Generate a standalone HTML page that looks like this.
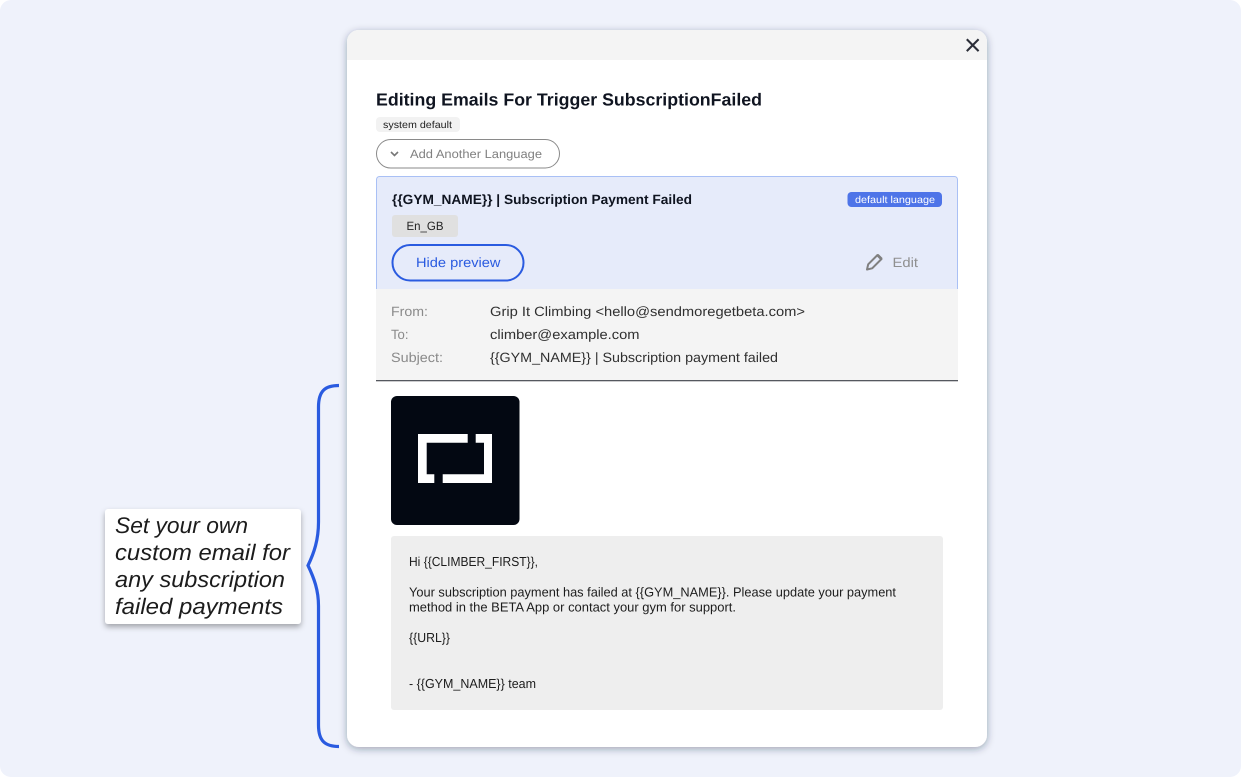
<!DOCTYPE html>
<html lang="en">
<head>
<meta charset="utf-8">
<title>Editing Emails</title>
<style>
html,body{margin:0;padding:0;width:1241px;height:777px;overflow:hidden;background:#fff}
svg{display:block}
text{font-family:"Liberation Sans",sans-serif;text-rendering:geometricPrecision}
.b{font-weight:700}
</style>
</head>
<body>
<svg xmlns="http://www.w3.org/2000/svg" width="1241" height="777" viewBox="0 0 1241 777">
<defs>
<filter id="s1" x="-10%" y="-10%" width="120%" height="120%"><feDropShadow dx="0" dy="2" stdDeviation="4" flood-color="#1a2340" flood-opacity="0.38"/></filter>
<filter id="s2" x="-15%" y="-15%" width="130%" height="140%"><feDropShadow dx="0" dy="3" stdDeviation="3" flood-color="#000" flood-opacity="0.32"/></filter>
<clipPath id="m"><rect x="347" y="30" width="640" height="717" rx="12"/></clipPath>
</defs>
<rect width="1241" height="777" rx="11" fill="#eff2fb"/>

<!-- modal -->
<rect x="347" y="30" width="640" height="717" rx="12" fill="#fff" filter="url(#s1)"/>
<rect x="347" y="30" width="640" height="30" fill="#f4f4f4" clip-path="url(#m)"/>
<path d="M966.800 39.300L978.600 51.100M978.600 39.300L966.800 51.100" stroke="#2b2e38" stroke-width="2.100" fill="none"/>

<text class="b" x="376" y="105.500" font-size="17.500" fill="#0f1420" textLength="386" lengthAdjust="spacingAndGlyphs">Editing Emails For Trigger SubscriptionFailed</text>

<rect x="376" y="117" width="84" height="15" rx="4" fill="#f2f2f2"/>
<text x="383" y="128" font-size="10" fill="#222" textLength="69" lengthAdjust="spacingAndGlyphs">system default</text>

<rect x="376.500" y="139.500" width="183" height="28.500" rx="14.250" fill="#fff" stroke="#8a8a8a"/>
<path d="M391 152l3.500 3.500l3.500-3.500" fill="none" stroke="#777" stroke-width="1.600"/>
<text x="410" y="158" font-size="12" fill="#808080" textLength="132" lengthAdjust="spacingAndGlyphs">Add Another Language</text>

<!-- blue panel -->
<path d="M376.500 289.500V179.500a3 3 0 0 1 3-3h575a3 3 0 0 1 3 3V289.500Z" fill="#e6ebfa" stroke="#a9c0f5"/>
<text class="b" x="392" y="204" font-size="13.500" fill="#0f1420" textLength="300" lengthAdjust="spacingAndGlyphs">{{GYM_NAME}} | Subscription Payment Failed</text>

<rect x="847.500" y="192" width="94.500" height="15" rx="4" fill="#4e74e8"/>
<text x="855" y="203" font-size="10" fill="#fff" textLength="80" lengthAdjust="spacingAndGlyphs">default language</text>

<rect x="392" y="215" width="66" height="22" rx="3" fill="#e0e0e0"/>
<text x="406.500" y="230" font-size="12" fill="#222" textLength="37" lengthAdjust="spacingAndGlyphs">En_GB</text>

<rect x="392.500" y="245" width="131" height="35.500" rx="17.700" fill="#e6ebfa" stroke="#2a5be0" stroke-width="2"/>
<text x="416" y="267" font-size="13.500" fill="#2a5be0" textLength="84.500" lengthAdjust="spacingAndGlyphs">Hide preview</text>

<path d="M867 269.500l1.200-5.200L877.500 255l4 4L872.200 268.300Z" fill="#e6ebfa" stroke="#808080" stroke-width="2" stroke-linejoin="round"/>
<path d="M876.500 256l4 4L882.500 258l-4-4Z" fill="#808080"/>
<text x="892.500" y="267" font-size="13.500" fill="#8f8f8f" textLength="25.500" lengthAdjust="spacingAndGlyphs">Edit</text>

<!-- mail header -->
<rect x="376" y="289" width="582" height="91" fill="#f4f4f4"/>
<rect x="376" y="380" width="582" height="1.300" fill="#55585f"/>
<text x="391" y="316" font-size="13.500" fill="#8a8a8a" textLength="37" lengthAdjust="spacingAndGlyphs">From:</text>
<text x="391" y="339" font-size="13.500" fill="#8a8a8a" textLength="17.500" lengthAdjust="spacingAndGlyphs">To:</text>
<text x="391" y="362" font-size="13.500" fill="#8a8a8a" textLength="52" lengthAdjust="spacingAndGlyphs">Subject:</text>
<text x="490" y="316" font-size="13.500" fill="#303030" textLength="315" lengthAdjust="spacingAndGlyphs">Grip It Climbing &lt;hello@sendmoregetbeta.com&gt;</text>
<text x="490" y="339" font-size="13.500" fill="#303030" textLength="149.500" lengthAdjust="spacingAndGlyphs">climber@example.com</text>
<text x="490" y="362" font-size="13.500" fill="#303030" textLength="288" lengthAdjust="spacingAndGlyphs">{{GYM_NAME}} | Subscription payment failed</text>

<!-- logo -->
<rect x="391" y="396" width="128.500" height="129" rx="6" fill="#030812"/>
<path d="M418 434H467.700V442.700H426.700V474.300H434.300V483H418Z" fill="#fff"/>
<path d="M475.700 434H492V483H442.700V474.300H484V442.700H475.700Z" fill="#fff"/>

<!-- email body -->
<rect x="391" y="536" width="552" height="174" rx="3" fill="#eeeeee"/>
<g font-size="13" fill="#1c1c1c">
<text x="409" y="566" textLength="129" lengthAdjust="spacingAndGlyphs">Hi {{CLIMBER_FIRST}},</text>
<text x="409" y="596.500" textLength="487" lengthAdjust="spacingAndGlyphs">Your subscription payment has failed at {{GYM_NAME}}. Please update your payment</text>
<text x="409" y="611.500" textLength="327" lengthAdjust="spacingAndGlyphs">method in the BETA App or contact your gym for support.</text>
<text x="409" y="642" textLength="41" lengthAdjust="spacingAndGlyphs">{{URL}}</text>
<text x="409" y="688" textLength="127" lengthAdjust="spacingAndGlyphs">- {{GYM_NAME}} team</text>
</g>

<!-- brace -->
<path d="M339 385.500C325 385.500 318.500 391 318.500 407V522C318.500 540 314 553 308 565.500C314 578 318.500 590 318.500 606V725C318.500 741 325 746.500 339 746.500" fill="none" stroke="#2a5be0" stroke-width="3.200"/>

<!-- note -->
<rect x="105" y="509" width="196" height="115" rx="3" fill="#fff" filter="url(#s2)"/>
<g font-size="22.500" font-style="italic" fill="#1c1c1c">
<text x="115" y="533" textLength="133" lengthAdjust="spacingAndGlyphs">Set your own</text>
<text x="115" y="560" textLength="175" lengthAdjust="spacingAndGlyphs">custom email for</text>
<text x="115" y="587" textLength="170" lengthAdjust="spacingAndGlyphs">any subscription</text>
<text x="115" y="614" textLength="168" lengthAdjust="spacingAndGlyphs">failed payments</text>
</g>
</svg>
</body>
</html>
